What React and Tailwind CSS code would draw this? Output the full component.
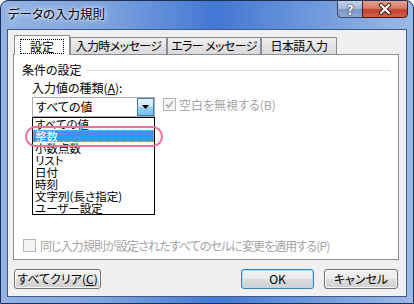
import React from "react";

const FONT = "font-['Noto_Sans_CJK_JP','Noto_Sans',sans-serif] [font-feature-settings:'palt']";

const TABS = [
  { label: "設定", w: "w-[56px]", active: true },
  { label: "入力時メッセージ", w: "w-[97px]" },
  { label: "エラー メッセージ", w: "w-[94px]" },
  { label: "日本語入力", w: "w-[76px]" },
];

const ITEMS = ["すべての値", "整数", "小数点数", "リスト", "日付", "時刻", "文字列(長さ指定)", "ユーザー設定"];

function Check({ checked }) {
  return (
    <span className="flex h-[13px] w-[13px] shrink-0 items-center justify-center border border-[#b4b4b4] bg-[#f4f4f4]">
      {checked && (
        <svg viewBox="0 0 9 9" className="h-[9px] w-[9px]">
          <path d="M1.2 4.6 3.6 7 7.8 1.6" fill="none" stroke="#a9a9a9" strokeWidth="1.7" />
        </svg>
      )}
    </span>
  );
}

function Btn({ children, w, primary }) {
  return (
    <button
      className={[
        "flex h-[20px] items-center justify-center rounded-[3px] border text-[12px] leading-none text-black",
        "bg-[linear-gradient(#f3f3f3_0%,#ebebeb_48%,#dddddd_52%,#cfcfcf_100%)]",
        primary ? "border-[#3c7fb1] shadow-[inset_0_0_0_1px_#a8def6]" : "border-[#707070] shadow-[inset_0_0_0_1px_#fbfbfb]",
        w,
      ].join(" ")}
    >
      {children}
    </button>
  );
}

export default function App() {
  return (
    <div className={`relative flex h-[304px] w-[414px] flex-col overflow-hidden rounded-t-[8px] border border-[#1b2f57] bg-[linear-gradient(90deg,#93b3e3_0%,#7ea4dd_25%,#4278d3_52%,#6d98db_75%,#9cbae6_100%)] ${FONT}`}>
      {/* title bar */}
      <div className="flex h-[28px] items-start">
        <div className="pl-[7px] pt-[5px] text-[12.5px] leading-[16px] text-black [text-shadow:0_0_6px_#ffffff,0_0_3px_#ffffff]">
          データの入力規則
        </div>
        <div className="-mt-px ml-auto mr-[5px] flex">
          <div className="flex h-[18px] w-[26px] items-center justify-center rounded-bl-[4px] border border-[#34476c] bg-[linear-gradient(#c3d1e8_0%,#a6b9db_45%,#7b95c4_55%,#8ea8d6_100%)] text-[13px] font-bold leading-none text-white [text-shadow:0_0_1px_#203050,0_0_2px_#203050]">
            ?
          </div>
          <div className="-ml-px flex h-[18px] w-[46px] items-center justify-center rounded-br-[4px] border border-[#4b1a14] bg-[linear-gradient(#e6a08f_0%,#d77a65_45%,#c24330_55%,#d0604a_100%)]">
            <svg viewBox="0 0 14 12" className="h-[12px] w-[14px]">
              <path d="M3 2 11 10M11 2 3 10" stroke="#3b2220" strokeWidth="4.2" strokeLinecap="round" />
              <path d="M3 2 11 10M11 2 3 10" stroke="#ffffff" strokeWidth="2.2" strokeLinecap="round" />
            </svg>
          </div>
        </div>
      </div>

      {/* client area */}
      <div className="relative mx-[6px] mb-[6px] flex flex-1 flex-col border border-[#3d5a8a] bg-[#f0f0f0] pt-[5px] text-[12px] text-black">
        <div className="ml-[5px] w-[386px]">
          {/* tabs */}
          <div className="relative z-10 -mb-px flex h-[20px] items-end pl-px">
            {TABS.map((t) =>
              t.active ? (
                <div key={t.label} className={`flex h-[20px] items-start justify-center border border-b-0 border-[#898c95] bg-white pt-[3px] ${t.w}`}>
                  <span className="border border-dotted border-black px-[9px] leading-[13px]">{t.label}</span>
                </div>
              ) : (
                <div key={t.label} className={`mb-px flex h-[17px] items-center justify-center whitespace-nowrap border border-b-0 border-[#898c95] bg-[linear-gradient(#f2f2f2,#e3e3e3_50%,#dadada)] leading-none tracking-[-0.6px] ${t.w}`}>
                  {t.label}
                </div>
              )
            )}
          </div>

          {/* panel */}
          <div className="flex h-[206px] flex-col border border-[#898c95] bg-white">
            <div className="mt-[8px] flex h-[14px] items-center pl-[8px] pr-[8px]">
              <span className="leading-[14px]">条件の設定</span>
              <div className="ml-[4px] h-px flex-1 bg-[#d5dfe5]" />
            </div>
            <div className="mt-[4px] h-[14px] pl-[18px] leading-[14px]">
              入力値の種類(<span className="underline underline-offset-[1px]">A</span>):
            </div>
            <div className="mt-[2px] flex items-start pl-[18px]">
              <div className="relative flex h-[20px] w-[123px] border border-[#abadb3] bg-white">
                <span className="pl-[3px] leading-[18px]">すべての値</span>
                <div className="ml-auto flex h-[18px] w-[17px] items-center justify-center border border-[#3c7fb1] bg-[linear-gradient(#e5f5fd_0%,#c4e8fa_48%,#98d4f4_52%,#72c0ee_100%)]">
                  <svg viewBox="0 0 7 4" className="h-[4px] w-[7px]">
                    <path d="M0 0h7L3.5 4z" fill="#000" />
                  </svg>
                </div>
                <div className="absolute left-[-1px] top-[19px] z-20 w-[123px] border border-black bg-white text-[11.5px]">
                  {ITEMS.map((it, i) => (
                    <div
                      key={it}
                      className={
                        i === 1
                          ? "h-[12px] whitespace-nowrap bg-[#3399ff] pl-[2px] leading-[12px] text-white outline-1 -outline-offset-1 outline-dotted outline-[#e8a050]"
                          : "h-[12px] whitespace-nowrap pl-[2px] leading-[12px]"
                      }
                    >
                      {it}
                    </div>
                  ))}
                </div>
              </div>
              <div className="ml-[8px] mt-px flex items-center gap-[3px] text-[#a3a3a3]">
                <Check checked />
                <span className="leading-[13px]">空白を無視する(B)</span>
              </div>
            </div>
            <div className="mb-[7px] mt-auto flex h-[13px] items-center gap-[4px] pl-[9px] text-[#a3a3a3]">
              <Check />
              <span className="leading-[13px] tracking-[-0.9px]">同じ入力規則が設定されたすべてのセルに変更を適用する(P)</span>
            </div>
          </div>
        </div>

        {/* buttons */}
        <div className="mt-[9px] flex pl-[6px] pr-[8px]">
          <Btn w="w-[87px]">
            すべてクリア(<span className="underline underline-offset-[1px]">C</span>)
          </Btn>
          <div className="ml-auto flex gap-[10px]">
            <Btn w="w-[73px]" primary>OK</Btn>
            <Btn w="w-[74px]">キャンセル</Btn>
          </div>
        </div>
      </div>

      {/* annotation */}
      <div className="pointer-events-none absolute left-[24px] top-[125px] z-30 h-[21px] w-[138px] rounded-[12px] border-2 border-[#f2709a]" />
    </div>
  );
}
